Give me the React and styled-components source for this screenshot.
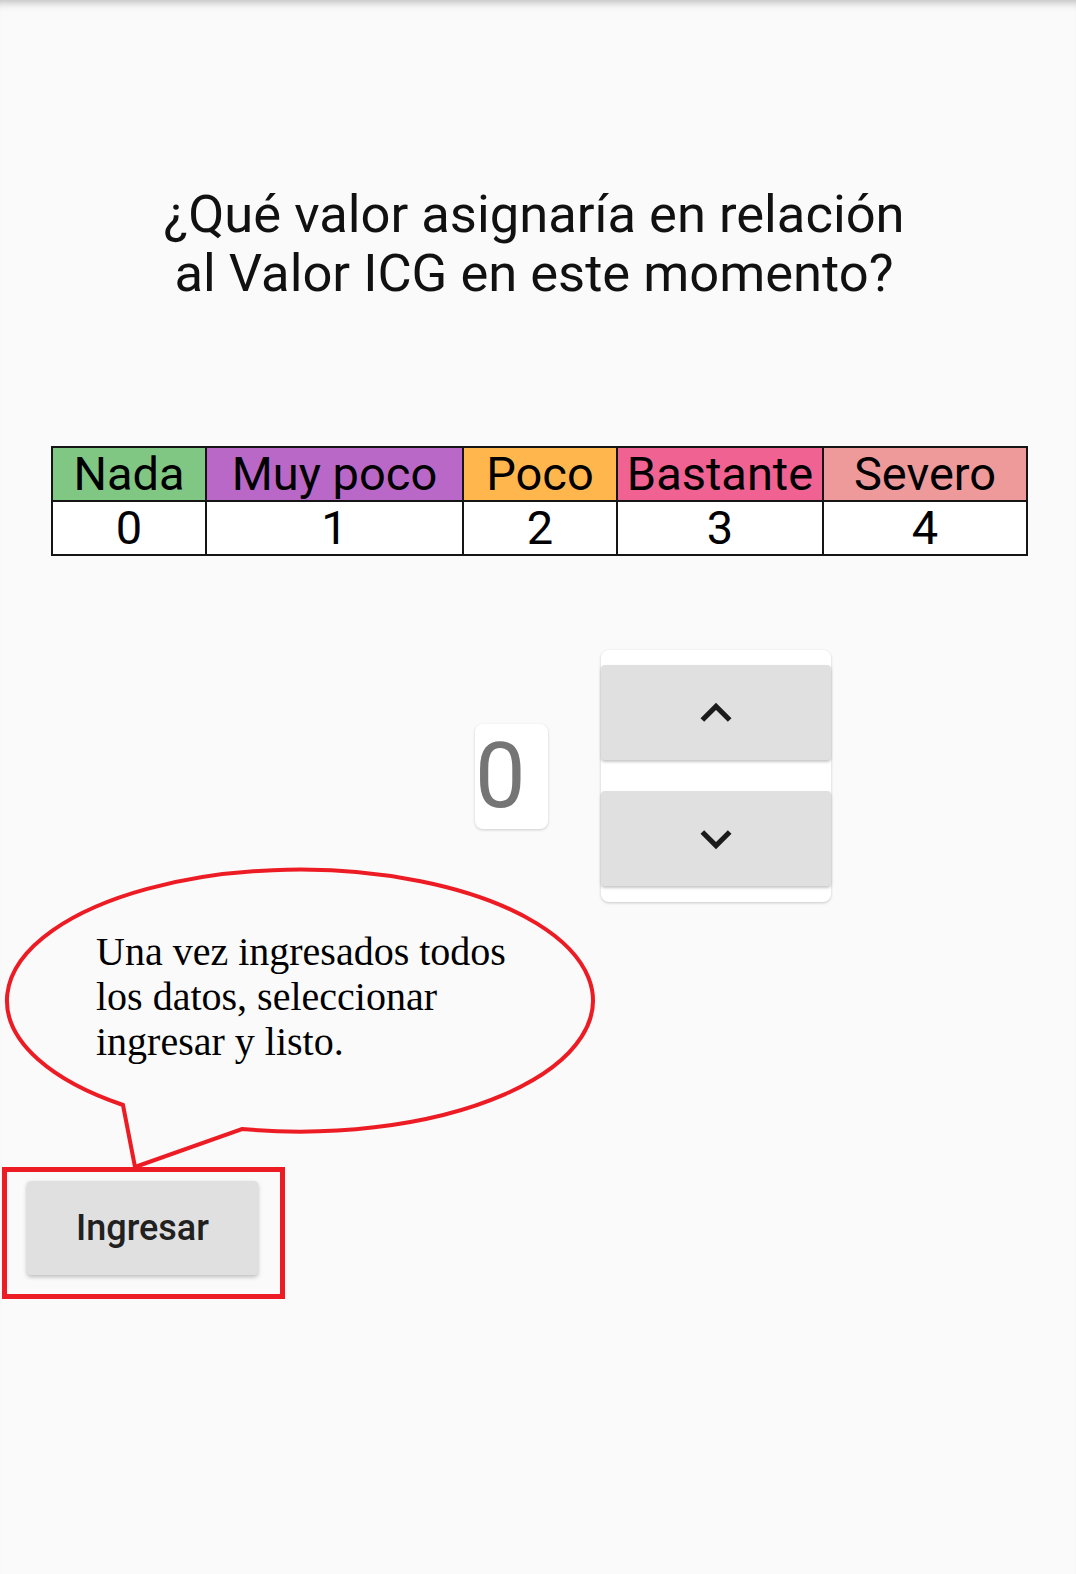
import React, { useState } from 'react';
import styled, { createGlobalStyle } from 'styled-components';

const GlobalStyle = createGlobalStyle`
  html, body {
    margin: 0;
    padding: 0;
    background: #fafafa;
    font-family: Roboto, "Liberation Sans", Arial, sans-serif;
  }
`;

const Page = styled.div`
  position: relative;
  min-height: 1574px;
  box-shadow: inset 0 10px 10px -8px rgba(0, 0, 0, 0.28);
  overflow: hidden;
`;

const Title = styled.h1`
  margin: 0;
  padding: 185px 8px 0 0;
  text-align: center;
  font-size: 52.5px;
  font-weight: 400;
  line-height: 59px;
  color: #111;
`;

const ScaleTable = styled.table`
  margin: 143px 0 0 51px;
  width: 975px;
  border-collapse: collapse;
  table-layout: fixed;
  font-size: 47px;
  color: #000;
`;

const Cell = styled.td`
  height: 52px;
  padding: 0;
  border: 2px solid #151515;
  text-align: center;
  line-height: 52px;
  background: ${(p) => p.$bg || '#fff'};
  white-space: nowrap;
  overflow: hidden;
`;

const PickerRow = styled.div`
  display: flex;
  justify-content: center;
  align-items: center;
  gap: 53px;
  padding-left: 230px;
  margin-top: 94px;
`;

const ValueBox = styled.div`
  width: 73px;
  height: 105px;
  background: #fff;
  border-radius: 8px;
  box-shadow: 0 1px 3px rgba(0, 0, 0, 0.18);
  font-size: 90px;
  line-height: 105px;
  color: #757575;
`;

const StepCard = styled.div`
  width: 230px;
  display: flex;
  flex-direction: column;
  gap: 31px;
  padding: 15px 0 16px;
  background: #fff;
  border-radius: 8px;
  box-shadow: 0 1px 3px rgba(0, 0, 0, 0.2);
`;

const StepButton = styled.button`
  height: 95px;
  border: none;
  border-radius: 4px;
  background: #e0e0e0;
  box-shadow: 0 2px 3px rgba(0, 0, 0, 0.22);
  display: flex;
  align-items: center;
  justify-content: center;
  cursor: pointer;
  padding: 0;
`;

const SubmitArea = styled.div`
  position: relative;
  margin: 279px 0 0 27px;
  width: 231px;
`;

const SubmitButton = styled.button`
  width: 231px;
  height: 94px;
  border: none;
  border-radius: 4px;
  background: #e0e0e0;
  box-shadow: 0 2px 4px rgba(0, 0, 0, 0.25);
  font-family: Roboto, "Liberation Sans", sans-serif;
  font-size: 36px;
  font-weight: 500;
  color: #212121;
  cursor: pointer;
`;

const RedFrame = styled.div`
  position: absolute;
  left: -25px;
  top: -14px;
  width: 273px;
  height: 122px;
  border: 5px solid #ed1c24;
  pointer-events: none;
`;

const Callout = styled.div`
  position: absolute;
  left: 0;
  top: 860px;
  width: 600px;
  height: 320px;
  box-sizing: border-box;
  padding: 69px 0 0 96px;
`;

const CalloutShape = styled.svg`
  position: absolute;
  left: 0;
  top: 0;
`;

const CalloutText = styled.p`
  position: relative;
  margin: 0;
  font-family: "Liberation Serif", "Times New Roman", serif;
  font-size: 40px;
  line-height: 45px;
  color: #000;
`;

const Chevron = ({ up }) => (
  <svg width="62" height="62" viewBox="0 0 24 24" fill="#1b1b1b">
    {up ? (
      <path d="M12 8l-6 6 1.41 1.41L12 10.83l4.59 4.58L18 14z" />
    ) : (
      <path d="M16.59 8.59L12 13.17 7.41 8.59 6 10l6 6 6-6z" />
    )}
  </svg>
);

const levels = [
  { label: 'Nada', bg: '#81c784', w: 154 },
  { label: 'Muy poco', bg: '#ba68c8', w: 257 },
  { label: 'Poco', bg: '#ffb74d', w: 154 },
  { label: 'Bastante', bg: '#f06292', w: 206 },
  { label: 'Severo', bg: '#ef9a9a', w: 204 },
];

export default function App() {
  const [value, setValue] = useState(0);

  return (
    <Page>
      <GlobalStyle />
      <Title>
        ¿Qué valor asignaría en relación
        <br />
        al Valor ICG en este momento?
      </Title>

      <ScaleTable>
        <colgroup>
          {levels.map((l) => (
            <col key={l.label} style={{ width: l.w }} />
          ))}
        </colgroup>
        <tbody>
          <tr>
            {levels.map((l) => (
              <Cell key={l.label} $bg={l.bg}>{l.label}</Cell>
            ))}
          </tr>
          <tr>
            {levels.map((l, i) => (
              <Cell key={l.label}>{i}</Cell>
            ))}
          </tr>
        </tbody>
      </ScaleTable>

      <PickerRow>
        <ValueBox>{value}</ValueBox>
        <StepCard>
          <StepButton onClick={() => setValue((v) => Math.min(4, v + 1))}>
            <Chevron up />
          </StepButton>
          <StepButton onClick={() => setValue((v) => Math.max(0, v - 1))}>
            <Chevron />
          </StepButton>
        </StepCard>
      </PickerRow>

      <SubmitArea>
        <SubmitButton>Ingresar</SubmitButton>
        <RedFrame />
      </SubmitArea>

      <Callout>
        <CalloutShape width="600" height="320" viewBox="0 0 600 320">
          <path
            d="M242 269 A293 131 0 1 0 123 245 L135 307 Z"
            fill="none"
            stroke="#ed1c24"
            strokeWidth="4"
          />
        </CalloutShape>
        <CalloutText>
          Una vez ingresados todos
          <br />
          los datos, seleccionar
          <br />
          ingresar y listo.
        </CalloutText>
      </Callout>
    </Page>
  );
}
